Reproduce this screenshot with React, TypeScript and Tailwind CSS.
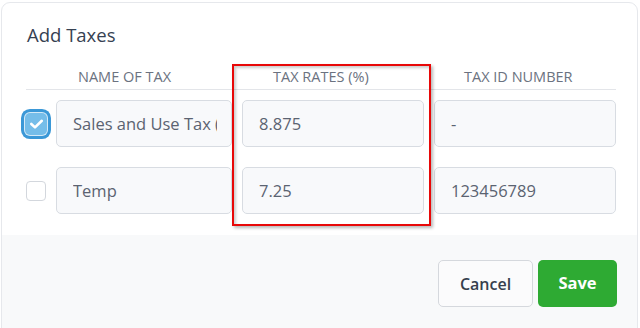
import React from "react";

const font = { fontFamily: '"Open Sans", "Noto Sans", sans-serif' };

function Checkbox({ checked }: { checked?: boolean }) {
  if (checked) {
    return (
      <span className="flex h-[20px] w-[20px] items-center justify-center rounded-[4px] bg-[#75bde9] shadow-[0_0_0_1px_#75bde9,0_0_0_2px_#d4e9f7,0_0_0_5px_#3b98d7]">
        <svg width="20" height="20" viewBox="0 0 20 20" fill="none">
          <polyline
            points="5.3,10 9,13.4 15.8,6.8"
            stroke="white"
            strokeWidth="2.6"
            strokeLinecap="round"
            strokeLinejoin="round"
          />
        </svg>
      </span>
    );
  }
  return <span className="block h-[20px] w-[20px] rounded-[4px] border border-[#d3d7dd] bg-white" />;
}

function Field({ value }: { value: string }) {
  return (
    <input
      readOnly
      value={value}
      style={font}
      className="h-[47px] w-full rounded-[5px] border border-[#d8dce2] bg-[#f8f9fb] pl-[16px] pr-[14px] text-[16.5px] text-[#5b6371] outline-none"
    />
  );
}

export default function App() {
  const rows = [
    { checked: true, name: "Sales and Use Tax (NYC)", rate: "8.875", id: "-" },
    { checked: false, name: "Temp", rate: "7.25", id: "123456789" },
  ];
  return (
    <div className="relative h-[328px] w-[640px] overflow-hidden bg-white pl-[1px] pt-[2px]" style={font}>
      <div className="w-[637px] overflow-hidden rounded-[9px] border border-[#e6e8ec] bg-white">
        <div className="pl-6 pt-[18px] pb-[21px]">
          <h2 className="pl-px text-[18.5px] leading-[28px] text-[#364152]">Add Taxes</h2>
          <div className="w-[590px]">
            <div className="mt-[18px] grid grid-cols-[20px_176px_182px_182px] gap-x-[10px] border-b border-[#e3e5e9] pb-[2px] text-[14.5px] leading-[20px] text-[#6b7280]">
              <span />
              <span className="pl-[22px]">NAME OF TAX</span>
              <span className="pl-[31px]">TAX RATES (%)</span>
              <span className="pl-[30px]">TAX ID NUMBER</span>
            </div>
            <div className="mt-[10px] flex flex-col gap-[20px]">
              {rows.map((r) => (
                <div key={r.name} className="grid grid-cols-[20px_176px_182px_182px] items-center gap-x-[10px]">
                  <Checkbox checked={r.checked} />
                  <Field value={r.name} />
                  <Field value={r.rate} />
                  <Field value={r.id} />
                </div>
              ))}
            </div>
          </div>
        </div>
        <div className="flex h-[120px] justify-end gap-[5px] bg-[#f8f9fa] pr-5 pt-[25px]">
          <button className="h-[47px] w-[95px] rounded-[5px] border border-[#d5d8dd] bg-[#fbfbfc] text-[16px] font-semibold text-[#363f4d]">
            Cancel
          </button>
          <button className="h-[47px] w-[79px] rounded-[5px] bg-[#2eaa33] text-[16.5px] font-bold text-white">
            Save
          </button>
        </div>
      </div>
      <div className="absolute left-[232px] top-[64px] h-[162px] w-[199px] border-2 border-[#e80808] shadow-[2px_2px_3px_rgba(0,0,0,0.28),inset_2px_2px_3px_rgba(0,0,0,0.2)]" />
    </div>
  );
}
